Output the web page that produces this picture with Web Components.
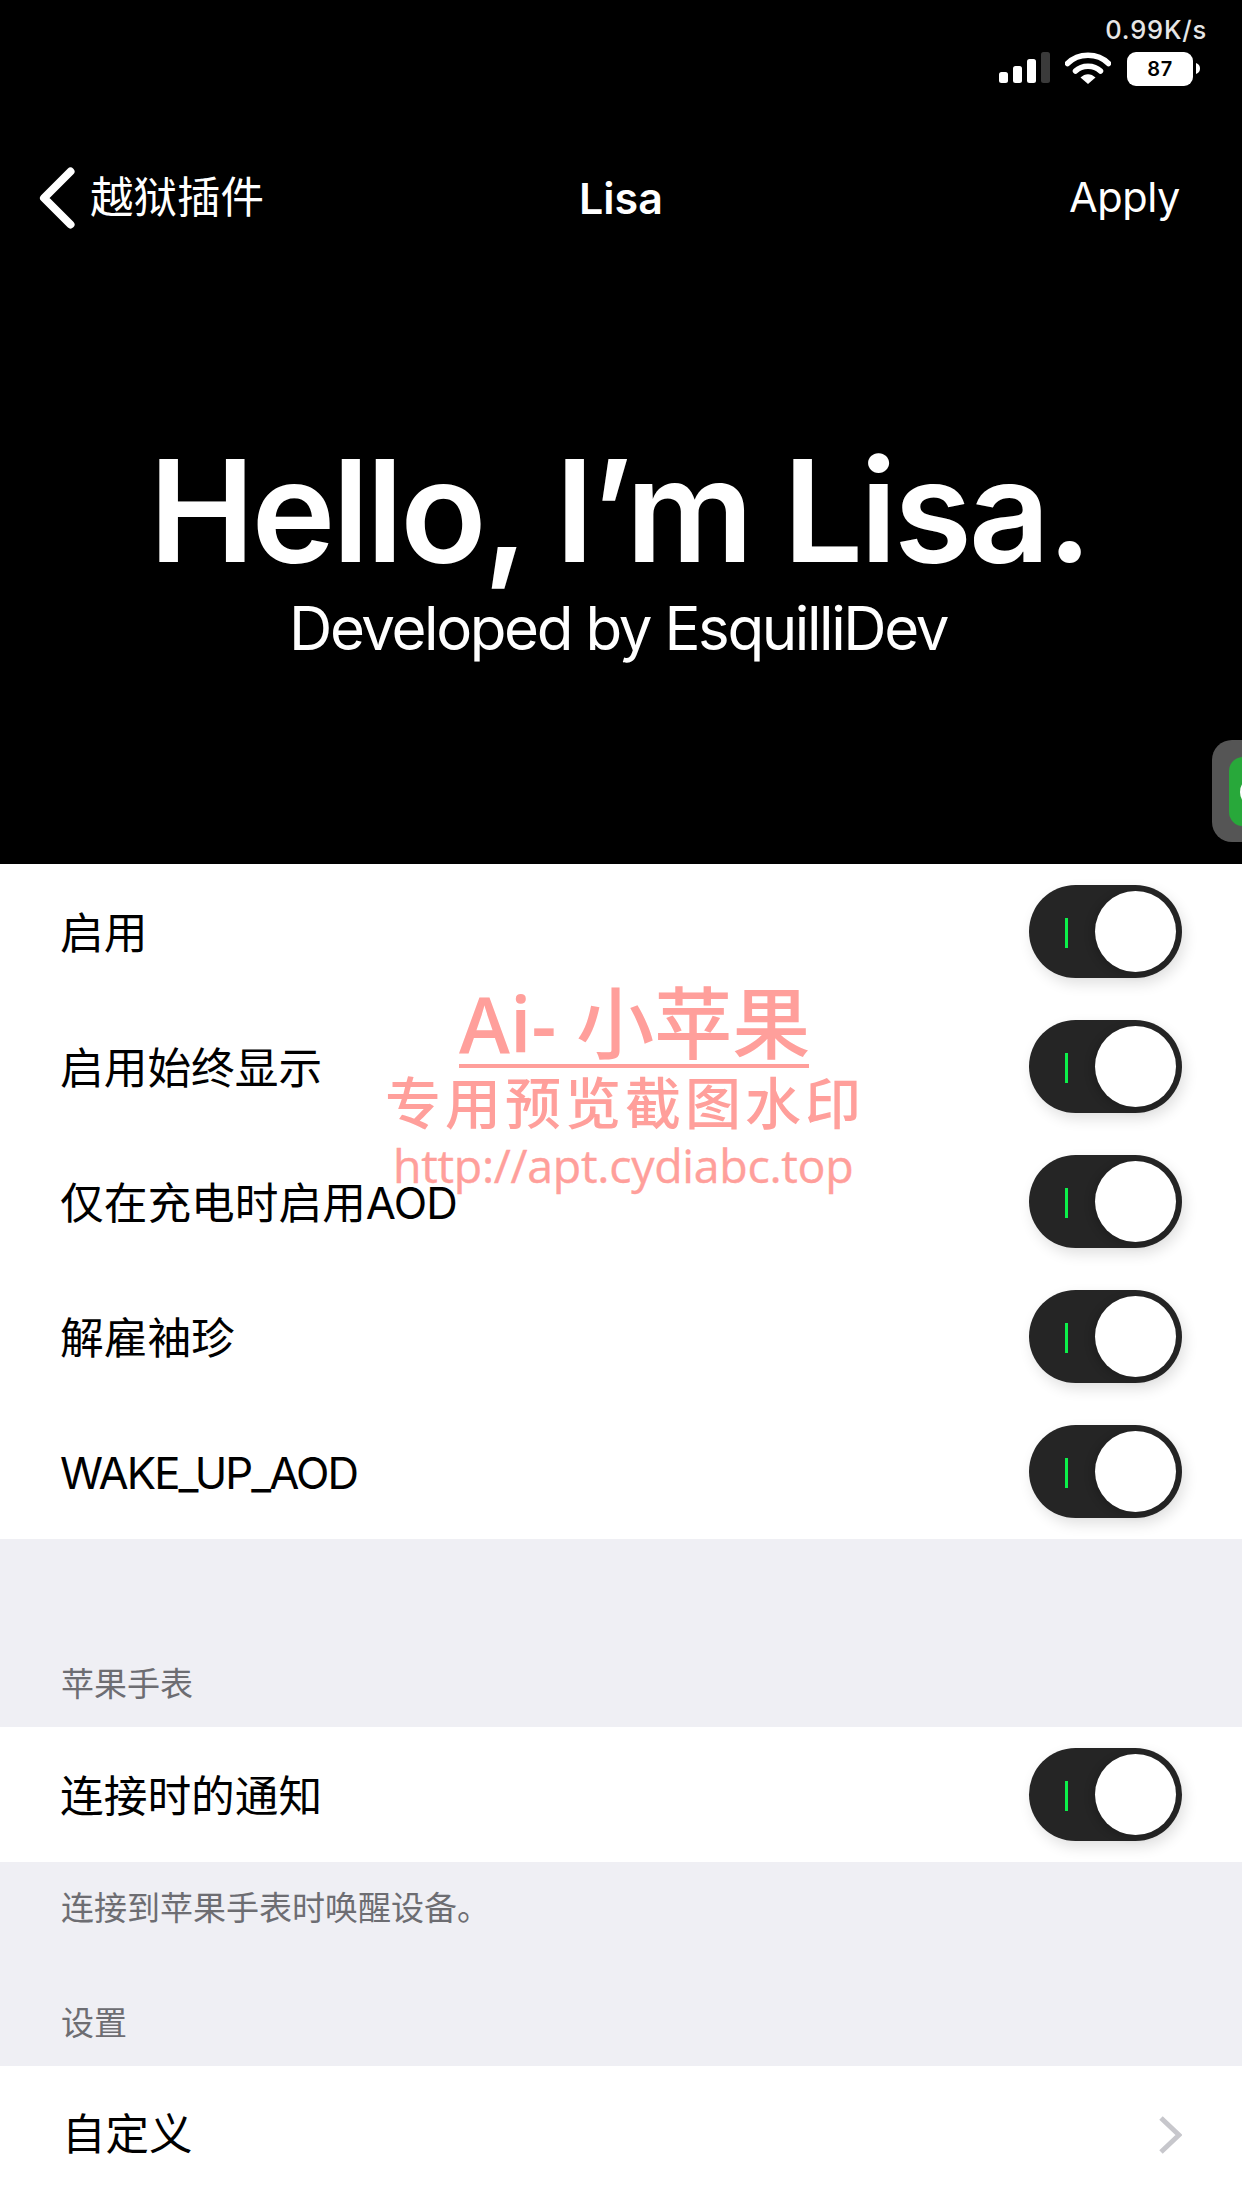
<!DOCTYPE html>
<html lang="zh-CN"><head><meta charset="utf-8"><title>Lisa</title>
<style>
html,body{margin:0;padding:0;background:#efeff4;}
body{width:1242px;height:2208px;overflow:hidden;position:relative;font-family:Inter,"Noto Sans CJK SC",sans-serif;}
</style></head><body>
<status-bar></status-bar>
<nav-bar back="越狱插件" title="Lisa" action="Apply"></nav-bar>
<hero-banner title="Hello, I’m Lisa." sub="Developed by EsquilliDev"></hero-banner>
<setting-group>
  <switch-row>启用</switch-row>
  <switch-row>启用始终显示</switch-row>
  <switch-row>仅在充电时启用<span style="letter-spacing:-.8px">AOD</span></switch-row>
  <switch-row>解雇袖珍</switch-row>
  <switch-row><span style="letter-spacing:-1.950px">WAKE_UP_AOD</span></switch-row>
</setting-group>
<section-note kind="header" style="height:188px">苹果手表</section-note>
<setting-group><switch-row>连接时的通知</switch-row></setting-group>
<section-note kind="footer" style="height:68px">连接到苹果手表时唤醒设备。</section-note>
<section-note kind="header" style="height:136px">设置</section-note>
<setting-group><link-row>自定义</link-row></setting-group>
<float-touch></float-touch>
<water-mark></water-mark>
<script>
const def=(name,css,html)=>customElements.define(name,class extends HTMLElement{
  connectedCallback(){ if(this.shadowRoot) return;
    const r=this.attachShadow({mode:"open"});
    r.innerHTML=`<style>${css}</style>${typeof html==="function"?html(this):html}`;
  }
});
const cjk='Inter,"Noto Sans CJK SC",sans-serif';
def("status-bar",`:host{display:block;background:#000;height:110px;position:relative}
 .wrap{display:flex;flex-direction:column;align-items:flex-end;height:100%;padding:17px 35px 0 0;box-sizing:border-box}
 .speed{font:500 25.500px/26px Inter,sans-serif;color:#e6e6e6;letter-spacing:.8px}
 .icons{display:flex;align-items:flex-start;margin-top:9px;margin-right:7px}
 svg{display:block}
 .bat{width:66px;height:34px;background:#fff;border-radius:9px;margin-left:16px;color:#000;font:600 20px/34px Inter,sans-serif;text-align:center;letter-spacing:.5px}
 .cap{margin:11px 0 0 3px}`,
 `<div class="wrap"><div class="speed">0.99K/s</div><div class="icons">
 <svg width="51" height="32" viewBox="0 0 51 32"><rect x="0" y="20" width="9" height="11" rx="2.500" fill="#fff"/><rect x="14" y="14" width="9" height="17" rx="2.500" fill="#fff"/><rect x="28" y="7" width="9" height="24" rx="2.500" fill="#fff"/><rect x="42" y="0" width="9" height="31" rx="2.500" fill="#3a3a3a"/></svg>
 <svg width="46" height="32" viewBox="0 0 46 32" style="margin-left:15px"><path d="M2.500 11.500C13.500 .5 32.500 .5 43.500 11.500" fill="none" stroke="#fff" stroke-width="5.500" stroke-linecap="round"/><path d="M10.500 19C17 12.500 29 12.500 35.500 19" fill="none" stroke="#fff" stroke-width="5.500" stroke-linecap="round"/><path d="M15.500 25.500C20 21 26 21 30.500 25.500L23 32Z" fill="#fff"/></svg>
 <div class="bat">87</div>
 <svg class="cap" width="4" height="11" viewBox="0 0 4 11"><path d="M0 0C3 1 4 3 4 5.500S3 10 0 11Z" fill="#fff"/></svg>
 </div></div>`);
def("nav-bar",`:host{display:block;background:#000;height:176px;color:#fff}
 .bar{display:grid;grid-template-columns:1fr auto 1fr;align-items:center;height:100%;padding:0 62px;font:400 43.500px/1 ${cjk}}
 .back{display:flex;align-items:center;gap:15px;margin-left:-23px}
 svg{display:block}
 .t{font-weight:600;font-size:43px}
 .a{justify-self:end;font-size:41.500px;letter-spacing:-.4px}`,
 h=>`<div class="bar"><div class="back"><svg width="36" height="62" viewBox="0 0 36 62"><path d="M31.500 4.500 5 31l26.500 26.500" fill="none" stroke="#fff" stroke-width="8" stroke-linecap="round" stroke-linejoin="round"/></svg><span>${h.getAttribute("back")}</span></div><div class="t">${h.getAttribute("title")}</div><div class="a">${h.getAttribute("action")}</div></div>`);
def("hero-banner",`:host{display:block;background:#000;height:578px;color:#fff;text-align:center}
 h1{margin:0 4px 0 0;padding-top:153px;font:600 142px/1 Inter,sans-serif;letter-spacing:-3.250px}
 p{margin:11px 6px 0 0;font:400 60px/1.2 Inter,sans-serif;letter-spacing:-2.400px}`,
 h=>`<h1>${h.getAttribute("title")}</h1><p>${h.getAttribute("sub")}</p>`);
def("setting-group",`:host{display:block;background:#fff}`,`<slot></slot>`);
def("switch-row",`:host{display:flex;align-items:center;justify-content:space-between;height:135px;padding:0 60px 0 60px;box-sizing:border-box;font:400 43.700px/1 ${cjk};color:#000}
 .t{position:relative;top:2px}
 .sw{width:153px;height:93px;border-radius:47px;background:#252525;position:relative;flex:none;box-shadow:3px 6px 14px rgba(0,0,0,.12)}
 .bar{position:absolute;left:36px;top:33px;width:3px;height:30px;background:#0cf04a}
 .knob{position:absolute;right:6px;top:6px;width:81px;height:81px;border-radius:50%;background:#fff;box-shadow:-3px 2px 8px rgba(0,0,0,.18)}`,
 `<span class="t"><slot></slot></span><div class="sw"><div class="bar"></div><div class="knob"></div></div>`);
def("link-row",`:host{display:flex;align-items:center;justify-content:space-between;height:142px;padding:0 60px 4px 62px;box-sizing:border-box;font:400 43.500px/1 ${cjk};color:#000}
 svg{display:block}`,
 `<span><slot></slot></span><svg width="24" height="40" viewBox="0 0 24 40"><path d="M3 3l18 17L3 37" fill="none" stroke="#c7c7cc" stroke-width="5"/></svg>`);
def("section-note",`:host{display:flex;box-sizing:border-box;background:#efeff4;color:#6d6d72;font:400 33px/1 ${cjk};padding:0 61px}
 :host([kind=header]){align-items:flex-end;padding-bottom:26px}
 :host([kind=footer]){align-items:flex-start;padding-top:30px}`,`<slot></slot>`);
def("float-touch",`:host{display:block;position:absolute;left:1212px;top:740px;width:30px;height:102px;background:#555;border-radius:20px 0 0 20px;overflow:hidden}
 .i{position:absolute;left:17px;top:17px;width:40px;height:69px;border-radius:14px 0 0 14px;background:#28a83a}
 .o{position:absolute;left:11px;top:22px;width:20px;height:26px;border-radius:50%;background:#fff}`,
 `<div class="i"><div class="o"></div></div>`);
def("water-mark",`:host{display:block;position:absolute;left:360px;top:970px;width:520px;height:240px;color:#ff9f9b;pointer-events:none}
 .a{position:absolute;left:99px;top:20px;width:350px;height:78px;box-sizing:border-box;border-bottom:4px solid #ff9f9b;font:600 77px/58px "Open Sans","Noto Sans CJK SC",sans-serif;white-space:nowrap;text-align:center}
 .a i{font:500 78px/58px "Noto Sans CJK SC",sans-serif;font-style:normal}
 .b{position:absolute;left:25px;top:102px;font:500 56px/56px "Noto Sans CJK SC",sans-serif;white-space:nowrap;letter-spacing:4px}
 .c{position:absolute;left:33px;top:170px;font:500 46.500px/50px "Open Sans",sans-serif;white-space:nowrap;letter-spacing:-.3px;-webkit-text-stroke:.4px #ff9f9b}`,
 `<div class="a">Ai- <i>小苹果</i></div><div class="b">专用预览截图水印</div><div class="c">http://apt.cydiabc.top</div>`);
</script>
</body></html>
